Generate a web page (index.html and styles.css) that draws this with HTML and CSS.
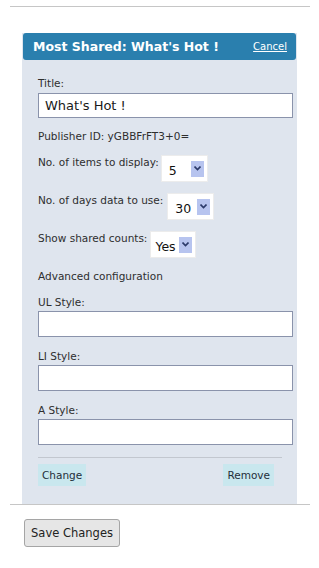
FILE: index.html
```html
<!DOCTYPE html>
<html>
<head>
<meta charset="utf-8">
<link rel="stylesheet" href="styles.css">
</head>
<body>
<div class="rule rule-top"></div>
<div class="panel">
  <div class="panel-head">
    <span class="panel-title">Most Shared: What's Hot !</span>
    <a class="cancel" href="#">Cancel</a>
  </div>
  <div class="panel-body">
    <div class="label">Title:</div>
    <div class="input input-title">What's Hot !</div>
    <div class="pub">Publisher ID: yGBBFrFT3+0=</div>
    <div class="row row-first">
      <span class="row-label">No. of items to display:</span>
      <span class="select sel-items"><span class="sel-val">5</span><span class="sel-arrow"><svg width="7" height="5" viewBox="0 0 7 5"><path d="M0.5 0.5 L3.5 3.5 L6.5 0.5" fill="none" stroke="#2b3a6a" stroke-width="1.6"/></svg></span></span>
    </div>
    <div class="row">
      <span class="row-label">No. of days data to use:</span>
      <span class="select sel-days"><span class="sel-val">30</span><span class="sel-arrow"><svg width="7" height="5" viewBox="0 0 7 5"><path d="M0.5 0.5 L3.5 3.5 L6.5 0.5" fill="none" stroke="#2b3a6a" stroke-width="1.6"/></svg></span></span>
    </div>
    <div class="row">
      <span class="row-label">Show shared counts:</span>
      <span class="select sel-counts"><span class="sel-val">Yes</span><span class="sel-arrow"><svg width="7" height="5" viewBox="0 0 7 5"><path d="M0.5 0.5 L3.5 3.5 L6.5 0.5" fill="none" stroke="#2b3a6a" stroke-width="1.6"/></svg></span></span>
    </div>
    <div class="adv">Advanced configuration</div>
    <div class="label label-style">UL Style:</div>
    <div class="input input-style"></div>
    <div class="label label-style">LI Style:</div>
    <div class="input input-style"></div>
    <div class="label label-style">A Style:</div>
    <div class="input input-style"></div>
    <div class="sep"></div>
    <div class="actions">
      <span class="btn">Change</span>
      <span class="btn">Remove</span>
    </div>
  </div>
</div>
<div class="rule rule-bottom"></div>
<div class="save-wrap"><span class="save">Save Changes</span></div>
</body>
</html>
```
FILE: styles.css
```css
html, body {
  margin: 0;
  padding: 0;
  background: #ffffff;
}
body {
  font-family: "DejaVu Sans", Verdana, sans-serif;
  font-size: 10.5px;
  line-height: 13px;
  color: #2e2e2e;
}
.rule {
  height: 0;
  border-top: 1px solid #c6c6c6;
  margin: 0 9px 0 10px;
}
.rule-top {
  margin-top: 6px;
}
.panel {
  margin: 26px 22px 0 22px;
  width: 275px;
  background: #dfe5ee;
}
.panel-head {
  height: 27px;
  background: #2a7fae;
  border-radius: 3px;
  display: flex;
  align-items: center;
  justify-content: space-between;
  padding: 0 9px 0 10px;
  margin-left: 1px;
  margin-right: 1px;
}
.panel-title {
  color: #ffffff;
  font-weight: bold;
  font-size: 12.5px;
}
.cancel {
  color: #ffffff;
  font-size: 10px;
  text-decoration: underline;
}
.panel-body {
  padding: 17px 4px 18px 16px;
}
.label {
  height: 13px;
}
.input {
  box-sizing: border-box;
  width: 255px;
  background: #ffffff;
  border: 1px solid #8a93ab;
  margin-top: 3px;
}
.input-title {
  height: 25px;
  font-size: 13px;
  line-height: 23px;
  padding-left: 6px;
  color: #1a1a1a;
}
.pub {
  margin-top: 12px;
}
.row {
  display: flex;
  align-items: flex-start;
  margin-top: 11px;
}
.row-first {
  margin-top: 12px;
}
.row-label {
  margin-top: 1px;
}
.select {
  box-sizing: border-box;
  height: 27px;
  background: #ffffff;
  border: 1px solid #ececec;
  display: flex;
  align-items: center;
  padding: 0 3px 0 7px;
  font-size: 12.5px;
  color: #111;
}
.sel-val {
  flex: 1;
  padding-top: 3px;
}
.sel-items { width: 47px; margin-left: 2px; }
.sel-days { width: 47px; margin-left: 4px; }
.sel-counts { width: 46px; margin-left: 3px; padding-left: 4px; }
.sel-arrow {
  flex: 0 0 13px;
  width: 13px;
  height: 16px;
  background: #b7c4ef;
  display: flex;
  align-items: center;
  justify-content: center;
}
.adv {
  margin-top: 12px;
}
.label-style {
  margin-top: 13px;
}
.input-style {
  height: 26px;
  margin-top: 2px;
}
.sep {
  margin-top: 12px;
  width: 244px;
  border-top: 1px solid #c2c7cf;
}
.actions {
  display: flex;
  justify-content: space-between;
  margin-top: 6px;
  width: 236px;
}
.btn {
  box-sizing: border-box;
  height: 22px;
  line-height: 22px;
  padding: 0 4px;
  background: #c9e7ee;
  color: #1f2f3a;
}
.save-wrap {
  padding: 14px 0 0 24px;
}
.save {
  display: inline-block;
  box-sizing: border-box;
  height: 28px;
  line-height: 26px;
  width: 96px;
  text-align: center;
  background: #e6e6e6;
  border: 1px solid #a5a5a5;
  border-radius: 3px;
  color: #222;
  font-size: 11.5px;
}
```
